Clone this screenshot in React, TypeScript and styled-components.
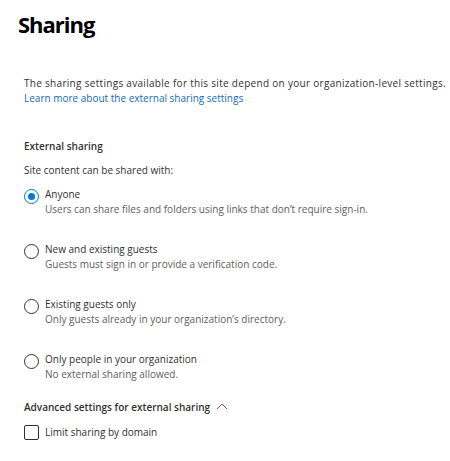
import React, { useState } from 'react';
import styled, { createGlobalStyle } from 'styled-components';

const Global = createGlobalStyle`
  html, body { margin: 0; padding: 0; background: #fff; }
  body { font-family: "Open Sans", "Segoe UI", sans-serif; color: #323130; }
`;

const options = [
  { key: 'anyone', label: 'Anyone', desc: 'Users can share files and folders using links that don\u2019t require sign-in.' },
  { key: 'guests', label: 'New and existing guests', desc: 'Guests must sign in or provide a verification code.' },
  { key: 'existing', label: 'Existing guests only', desc: 'Only guests already in your organization\u2019s directory.' },
  { key: 'org', label: 'Only people in your organization', desc: 'No external sharing allowed.' },
];

const App: React.FC = () => {
  const [value, setValue] = useState('anyone');
  const [limit, setLimit] = useState(false);

  return (
    <Page>
      <Global />
      <Title>Sharing</Title>
      <Body>
        <Intro>
          The sharing settings available for this site depend on your organization-level settings.
          <br />
          <Link href="#">Learn more about the external sharing settings</Link>
        </Intro>

        <SectionTitle>External sharing</SectionTitle>
        <Hint>Site content can be shared with:</Hint>

        <RadioList>
          {options.map((o) => (
            <Option key={o.key} onClick={() => setValue(o.key)}>
              <Radio $checked={value === o.key} />
              <OptionText>
                <OptionLabel>{o.label}</OptionLabel>
                <OptionDesc>{o.desc}</OptionDesc>
              </OptionText>
            </Option>
          ))}
        </RadioList>

        <Advanced>
          Advanced settings for external sharing
          <svg width="12" height="8" viewBox="0 0 12 8">
            <path d="M1 7 L6 2 L11 7" fill="none" stroke="#605e5c" strokeWidth="1" />
          </svg>
        </Advanced>

        <CheckRow onClick={() => setLimit(!limit)}>
          <Box $checked={limit} />
          Limit sharing by domain
        </CheckRow>
      </Body>
    </Page>
  );
};

export default App;

const Page = styled.div`
  padding: 8px 0 0 18px;
`;

const Title = styled.h1`
  margin: 0;
  font-size: 22px;
  font-weight: 700;
  line-height: 32px;
  color: #000;
  letter-spacing: -1px;
`;

const Body = styled.div`
  padding: 0 0 0 6px;
  font-size: 10px;
  line-height: 15px;
`;

const Intro = styled.p`
  margin: 36px 0 0;
  color: #323130;
  letter-spacing: 0.3px;
`;

const Link = styled.a`
  color: #0f6cbd;
  text-decoration: none;
  letter-spacing: 0;
`;

const SectionTitle = styled.div`
  margin-top: 33px;
  font-weight: 600;
`;

const Hint = styled.div`
  margin-top: 9px;
`;

const RadioList = styled.div`
  display: flex;
  flex-direction: column;
  gap: 25px;
  margin-top: 9px;
`;

const Option = styled.div`
  display: flex;
  align-items: flex-start;
  gap: 6px;
  cursor: pointer;
`;

const Radio = styled.span<{ $checked: boolean }>`
  position: relative;
  flex: none;
  box-sizing: border-box;
  width: 15px;
  height: 15px;
  margin-top: 1.5px;
  border-radius: 50%;
  border: 1px solid ${(p) => (p.$checked ? '#0078d4' : '#323130')};
  &::after {
    content: '';
    display: ${(p) => (p.$checked ? 'block' : 'none')};
    position: absolute;
    left: 3px;
    top: 3px;
    width: 7px;
    height: 7px;
    border-radius: 50%;
    background: #0078d4;
  }
`;

const OptionText = styled.div`
  display: flex;
  flex-direction: column;
`;

const OptionLabel = styled.span`
  color: #323130;
`;

const OptionDesc = styled.span`
  color: #605e5c;
`;

const Advanced = styled.div`
  display: flex;
  align-items: center;
  gap: 6px;
  margin-top: 18px;
  font-weight: 600;
  svg {
    margin-top: -3px;
  }
`;

const CheckRow = styled.div`
  display: flex;
  align-items: center;
  gap: 6px;
  margin-top: 10px;
  cursor: pointer;
`;

const Box = styled.span<{ $checked: boolean }>`
  flex: none;
  box-sizing: border-box;
  width: 15px;
  height: 15px;
  border: 1px solid #323130;
  border-radius: 2px;
  background: ${(p) => (p.$checked ? '#0078d4' : '#fff')};
`;
